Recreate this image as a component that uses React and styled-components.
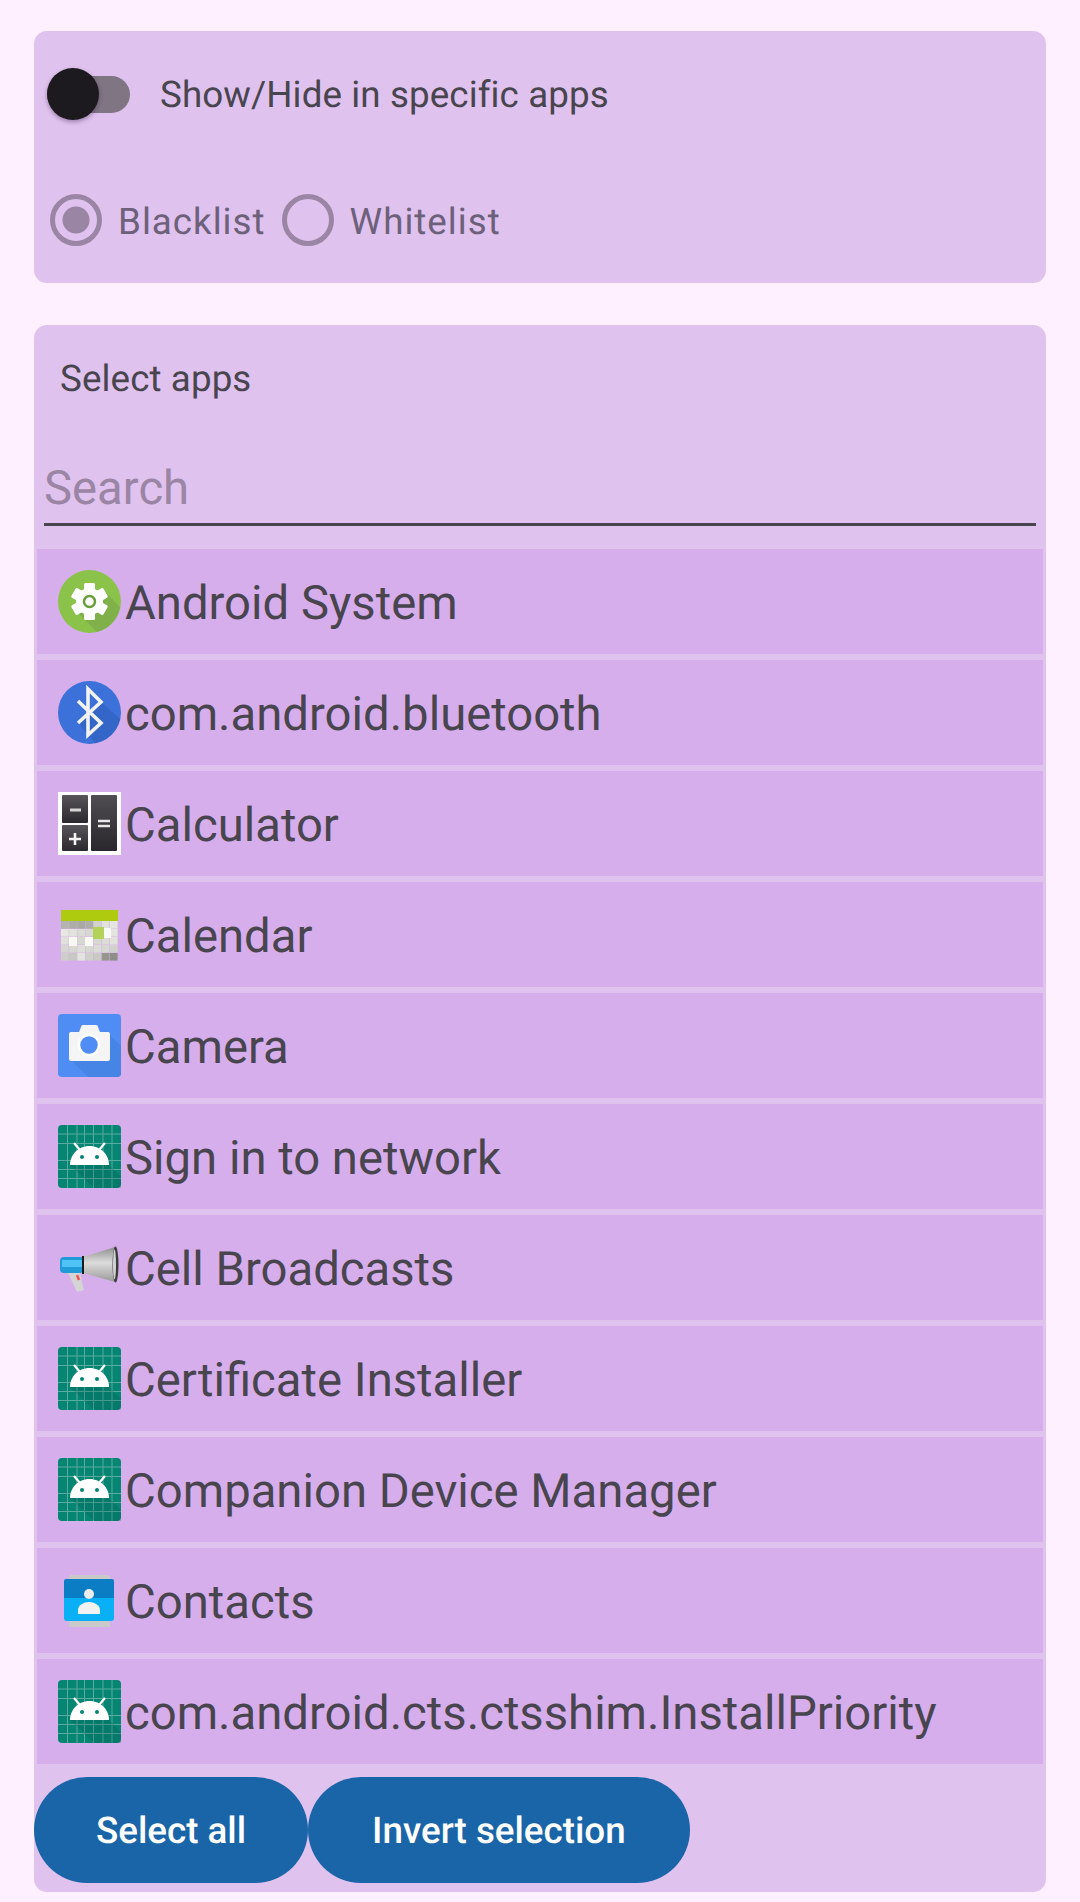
import React from "react";
import styled, { createGlobalStyle } from "styled-components";

const GlobalStyle = createGlobalStyle`
  html, body {
    margin: 0;
    padding: 0;
    background: #fff0ff;
  }
  body {
    font-family: Roboto, "Liberation Sans", sans-serif;
    text-rendering: geometricPrecision;
  }
`;

const GearIcon = () => (
  <svg viewBox="0 0 63 63" width="63" height="63">
    <circle cx="31.5" cy="31.5" r="31.5" fill="#8bc34a" />
    <path d="M20 43 L44 19 L62 37 A31.5 31.5 0 0 1 39 62 Z" fill="#7fb04a" />
    <g fill="#fff">
      {[0, 60, 120, 180, 240, 300].map((deg) => (
        <rect key={deg} x="26" y="13" width="11" height="10" rx="1.5" transform={`rotate(${deg} 31.5 31.5)`} />
      ))}
      <circle cx="31.5" cy="31.5" r="13.5" />
    </g>
    <circle cx="31.5" cy="31.5" r="5.5" fill="#fff" stroke="#689f38" strokeWidth="2.5" />
  </svg>
);

const BluetoothIcon = () => (
  <svg viewBox="0 0 63 63" width="63" height="63">
    <circle cx="31.5" cy="31.5" r="31.5" fill="#3b71d8" />
    <path d="M20 42 L30 54 L37 62 A31.5 31.5 0 0 0 62 38 L43 21 L34 30 Z" fill="#3366c6" />
    <path d="M20 20 L43 42 L30 54 V8 L43 21 L20 42" fill="none" stroke="#f2f2f2" strokeWidth="3.6" />
  </svg>
);

const CalculatorIcon = () => (
  <svg viewBox="0 0 63 63" width="63" height="63">
    <defs>
      <linearGradient id="calcKey" x1="0" y1="0" x2="0" y2="1">
        <stop offset="0" stopColor="#57555a" />
        <stop offset="1" stopColor="#2b292e" />
      </linearGradient>
      <linearGradient id="calcTall" x1="0" y1="0" x2="0" y2="1">
        <stop offset="0" stopColor="#4f4d52" />
        <stop offset="1" stopColor="#29272c" />
      </linearGradient>
    </defs>
    <rect width="63" height="63" fill="#fff" />
    <rect x="4" y="3" width="26" height="28" rx="1" fill="url(#calcKey)" />
    <rect x="4" y="33" width="26" height="26" rx="1" fill="url(#calcKey)" />
    <rect x="33" y="3" width="26" height="56" rx="1" fill="url(#calcTall)" />
    <path d="M12 18h11" stroke="#d6d6d6" strokeWidth="3" />
    <path d="M11 47h12M17 41v12" stroke="#f2f2f2" strokeWidth="2.6" />
    <path d="M40 29h12M40 34h12" stroke="#e8e8e8" strokeWidth="2.6" />
  </svg>
);

const calendarCells = [
  ["#b4b4ae", "#aeaea8", "#aaaaa4", "#aeaea8", "#d2d2cc", "#e2e2dc", "#e6e6e0"],
  ["#e8e8e2", "#e4e4de", "#dcdcd6", "#d8d8d2", "#d8d8d2", "#dedcd8", "#e4e4de"],
  ["#e0e0da", "#eeeee8", "#d8d8d2", "#e6e6e0", "#d8d8d2", "#dcdcd6", "#e2e2dc"],
  ["#d6d6d0", "#d8d8d2", "#deded8", "#d8d8d2", "#dcdcd6", "#d8d8d2", "#d2d2cc"],
  ["#cececa", "#c8c8c2", "#e4e4de", "#d0d0ca", "#cacac4", "#96968f", "#8f8f8a"],
];

const CalendarIcon = () => (
  <svg viewBox="0 0 63 63" width="63" height="63">
    <rect x="3" y="7" width="57" height="11" fill="#aecb10" />
    {calendarCells.map((row, r) =>
      row.map((color, c) => (
        <rect key={`${r}-${c}`} x={3 + c * 8.15} y={18 + r * 8} width="7.7" height="7.6" fill={color} />
      ))
    )}
    <rect x="11" y="34" width="8" height="9" fill="#f7f7f3" />
    <rect x="27" y="34" width="8" height="9" fill="#f9f9f5" />
    <rect x="46" y="25" width="7" height="10" fill="#f9f9f5" />
    <rect x="35" y="24" width="11" height="12" fill="#b4d25a" />
  </svg>
);

const CameraIcon = () => (
  <svg viewBox="0 0 63 63" width="63" height="63">
    <rect width="63" height="63" rx="4" fill="#4f8df5" />
    <path d="M13 46 L48 17 L63 32 V59 A4 4 0 0 1 59 63 H30 Z" fill="#4684e6" />
    <path d="M11 20a2 2 0 0 1 2-2h8l2-5a2 2 0 0 1 2-2h13a2 2 0 0 1 2 2l2 5h8a2 2 0 0 1 2 2v25a2 2 0 0 1-2 2H13a2 2 0 0 1-2-2z" fill="#f5f5f5" />
    <circle cx="31" cy="31" r="10" fill="#4f8df5" stroke="#fff" strokeWidth="2.5" />
  </svg>
);

const AndroidIcon = () => (
  <svg viewBox="0 0 63 63" width="63" height="63">
    <rect width="63" height="63" rx="4" fill="#078573" />
    <path
      d="M9.500 0v63M19 0v63M26.500 0v63M35.500 0v63M45 0v63M54 0v63M0 9h63M0 18.500h63M0 35.500h63M0 44.500h63M0 53.500h63"
      stroke="#58ab9e"
      strokeWidth="1"
    />
    <path d="M12 40h39L63 52V63H36z" fill="#04574c" opacity="0.22" />
    <path d="M12 40c0-10 8-19 19.500-19S51 30 51 40z" fill="#fff" />
    <path d="M22 25l-6-7M41 25l6-7" stroke="#fff" strokeWidth="2.2" />
    <circle cx="24" cy="32" r="2" fill="#078573" />
    <circle cx="39" cy="32" r="2" fill="#078573" />
  </svg>
);

const BroadcastIcon = () => (
  <svg viewBox="0 0 63 63" width="63" height="63">
    <defs>
      <linearGradient id="hornFill" x1="0" y1="0" x2="0" y2="1">
        <stop offset="0" stopColor="#8e8e8e" />
        <stop offset="0.45" stopColor="#dcdcdc" />
        <stop offset="1" stopColor="#9a9a9a" />
      </linearGradient>
    </defs>
    <path d="M10 37h12l4 17-7 2z" fill="#d4d4d4" />
    <path d="M19 39l2 5" stroke="#ef5350" strokeWidth="2.5" />
    <path d="M25 21 L57 11 V46 L25 37 Z" fill="url(#hornFill)" />
    <rect x="2" y="21" width="24" height="16" rx="4" fill="#1f9bd8" />
    <rect x="4" y="24" width="22" height="7" fill="#4fc3f7" />
    <path d="M25 20v18" stroke="#1c1c1c" strokeWidth="2" />
    <ellipse cx="57.500" cy="28.500" rx="3" ry="18" fill="#3c3c3c" />
    <ellipse cx="56.500" cy="28.500" rx="1.500" ry="15" fill="#d2d2d2" />
  </svg>
);

const ContactsIcon = () => (
  <svg viewBox="0 0 63 63" width="63" height="63">
    <path d="M11 8a2 2 0 0 1 2-2h37a2 2 0 0 1 2 2v50H11z" fill="#c9c9c9" />
    <path d="M6 12a2 2 0 0 1 2-2h46a2 2 0 0 1 2 2v18H6z" fill="#0b7dc4" />
    <path d="M6 29h50v20a3 3 0 0 1-3 3H9a3 3 0 0 1-3-3z" fill="#0ab0f5" />
    <circle cx="31" cy="25" r="5" fill="#ececec" />
    <path d="M20 45v-4c0-5 6-8 11-8s11 3 11 8v4z" fill="#f2f2f2" />
  </svg>
);

const apps = [
  { name: "Android System", icon: <GearIcon /> },
  { name: "com.android.bluetooth", icon: <BluetoothIcon /> },
  { name: "Calculator", icon: <CalculatorIcon /> },
  { name: "Calendar", icon: <CalendarIcon /> },
  { name: "Camera", icon: <CameraIcon /> },
  { name: "Sign in to network", icon: <AndroidIcon /> },
  { name: "Cell Broadcasts", icon: <BroadcastIcon /> },
  { name: "Certificate Installer", icon: <AndroidIcon /> },
  { name: "Companion Device Manager", icon: <AndroidIcon /> },
  { name: "Contacts", icon: <ContactsIcon /> },
  { name: "com.android.cts.ctsshim.InstallPriority", icon: <AndroidIcon /> },
];

export default function App() {
  return (
    <Page>
      <GlobalStyle />
      <Card>
        <SwitchRow>
          <SwitchTrack>
            <SwitchThumb />
          </SwitchTrack>
          <SwitchLabel>Show/Hide in specific apps</SwitchLabel>
        </SwitchRow>
        <RadioRow>
          <RadioItem>
            <RadioCircle $checked />
            <RadioLabel>Blacklist</RadioLabel>
          </RadioItem>
          <RadioItem>
            <RadioCircle />
            <RadioLabel>Whitelist</RadioLabel>
          </RadioItem>
        </RadioRow>
      </Card>
      <ListCard>
        <SectionTitle>Select apps</SectionTitle>
        <SearchBox>
          <SearchInput placeholder="Search" />
        </SearchBox>
        <AppList>
          {apps.map((app) => (
            <AppRow key={app.name}>
              <IconSlot>{app.icon}</IconSlot>
              <AppName>{app.name}</AppName>
            </AppRow>
          ))}
        </AppList>
        <Buttons>
          <PillButton $pad={62}>Select all</PillButton>
          <PillButton $pad={64}>Invert selection</PillButton>
        </Buttons>
      </ListCard>
    </Page>
  );
}

const Page = styled.div`
  width: 1080px;
  height: 1902px;
  box-sizing: border-box;
  padding: 31px 34px 0;
  display: flex;
  flex-direction: column;
  gap: 42px;
  overflow: hidden;
`;
const Card = styled.div`
  height: 252px;
  background: #dfc2ee;
  border-radius: 13px;
  display: flex;
  flex-direction: column;
`;
const SwitchRow = styled.div`
  display: flex;
  align-items: center;
  height: 52px;
  margin-top: 37px;
  padding-left: 13px;
`;
const SwitchTrack = styled.div`
  position: relative;
  width: 83px;
  height: 37px;
  margin-right: 30px;
  border-radius: 19px;
  background: #7f7583;
`;
const SwitchThumb = styled.div`
  position: absolute;
  left: 0;
  top: -8px;
  width: 52px;
  height: 52px;
  border-radius: 50%;
  background: #1c1a1f;
  box-shadow: 0 2px 4px rgba(60, 30, 70, 0.4);
`;
const SwitchLabel = styled.div`
  font-size: 36.75px;
  letter-spacing: 0.1px;
  color: #49454f;
  white-space: nowrap;
`;
const RadioRow = styled.div`
  display: flex;
  margin-top: 74px;
  padding-left: 16px;
  gap: 16px;
`;
const RadioItem = styled.div`
  display: flex;
  align-items: center;
  gap: 16px;
`;
const RadioCircle = styled.div`
  width: 52px;
  height: 52px;
  box-sizing: border-box;
  border: 5px solid #9b85a5;
  border-radius: 50%;
  background: ${(p) =>
    p.$checked
      ? "radial-gradient(circle, #9b85a5 0, #9b85a5 13px, transparent 14px)"
      : "transparent"};
`;
const RadioLabel = styled.div`
  font-size: 36.75px;
  letter-spacing: 1px;
  color: #6d607a;
  white-space: nowrap;
  position: relative;
  top: 1px;
`;
const ListCard = styled.div`
  height: 1567px;
  background: #dfc2ee;
  border-radius: 13px;
  display: flex;
  flex-direction: column;
`;
const SectionTitle = styled.div`
  font-size: 36.75px;
  letter-spacing: 0.1px;
  line-height: 44px;
  color: #49454f;
  margin-top: 32px;
  padding-left: 26px;
`;
const SearchBox = styled.div`
  margin: 49px 10px 0;
  height: 73px;
  border-bottom: 3px solid #49454f;
  display: flex;
`;
const SearchInput = styled.input`
  flex: 1;
  border: none;
  outline: none;
  background: transparent;
  padding: 2px 0 0 0;
  font-family: Roboto, "Liberation Sans", sans-serif;
  font-size: 47.25px;
  color: #49454f;
  text-rendering: geometricPrecision;
  &::placeholder {
    color: #9b85a5;
    opacity: 1;
  }
`;
const AppList = styled.div`
  display: flex;
  flex-direction: column;
  gap: 6px;
  margin: 23px 3px 0;
`;
const AppRow = styled.div`
  height: 105px;
  background: #d6aeec;
  display: flex;
  align-items: center;
  padding-left: 21px;
`;
const IconSlot = styled.div`
  width: 63px;
  height: 63px;
  flex: none;
  margin-right: 4px;
  svg {
    display: block;
  }
`;
const AppName = styled.div`
  font-size: 47.25px;
  color: #49454f;
  white-space: nowrap;
  position: relative;
  top: 1px;
`;
const Buttons = styled.div`
  display: flex;
  margin-top: 13px;
`;
const PillButton = styled.button`
  height: 106px;
  border: none;
  border-radius: 53px;
  padding: 0 ${(p) => p.$pad}px;
  background: #1a65a8;
  color: #fff;
  font-family: Roboto, "Liberation Sans", sans-serif;
  font-size: 36.75px;
  font-weight: 500;
  white-space: nowrap;
  text-rendering: geometricPrecision;
`;
